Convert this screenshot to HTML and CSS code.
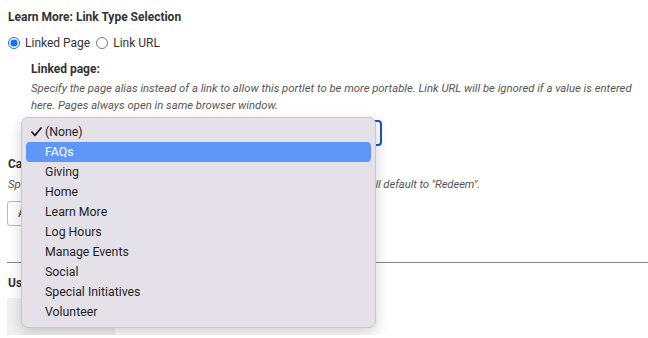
FILE: index.html
```html
<!DOCTYPE html>
<html>
<head>
<meta charset="utf-8">
<link rel="stylesheet" href="styles.css">
</head>
<body>
<div class="page">
  <div class="title">Learn More: Link Type Selection</div>
  <div class="radios">
    <label class="radio"><input type="radio" name="lt" checked> Linked Page</label>
    <label class="radio"><input type="radio" name="lt"> Link URL</label>
  </div>
  <div class="sub">
    <div class="label">Linked page:</div>
    <div class="help">Specify the page alias instead of a link to allow this portlet to be more portable. Link URL will be ignored if a value is entered here. Pages always open in same browser window.</div>
    <div class="select-wrap">
      <div class="select"></div>
      <div class="menu">
        <div class="item checked"><svg class="check" width="11" height="10" viewBox="0 0 11 10"><path d="M1 5.2 L4 8.4 L10 1" fill="none" stroke="#1c1c1c" stroke-width="1.7" stroke-linecap="round" stroke-linejoin="round"/></svg>(None)</div>
        <div class="item active">FAQs</div>
        <div class="item">Giving</div>
        <div class="item">Home</div>
        <div class="item">Learn More</div>
        <div class="item">Log Hours</div>
        <div class="item">Manage Events</div>
        <div class="item">Social</div>
        <div class="item">Special Initiatives</div>
        <div class="item">Volunteer</div>
      </div>
    </div>
  </div>
  <div class="label cta">Call to Action Text:</div>
  <div class="help help2">Specify the text to display on the call to action button. If left blank, the field will default to "Redeem".</div>
  <div class="input">Apply</div>
  <hr class="rule">
  <div class="label us">Use Image:</div>
  <div class="graybox"></div>
</div>
</body>
</html>
```
FILE: styles.css
```css
html, body { margin: 0; padding: 0; background: #fff; }
body { font-family: Roboto, "Liberation Sans", sans-serif; color: #333; font-size: 12px; }
.page { padding: 9px 0 0 8px; }
.title { font-weight: bold; font-size: 12px; line-height: 16px; color: #333; }
.radios { display: flex; align-items: center; gap: 6px; margin-top: 10px; height: 16px; }
.radio { display: flex; align-items: center; gap: 3px; font-size: 12px; color: #333; }
.radio input { margin: 0 2px 0 0; width: 12px; height: 12px; accent-color: #1a6cf0; }
.sub { padding-left: 23px; margin-top: 10px; }
.label { font-weight: bold; font-size: 12px; line-height: 16px; color: #333; }
.help { font-style: italic; font-size: 11.3px; line-height: 17px; color: #555; margin-top: 3px; }
.select-wrap { position: relative; margin-top: 6px; height: 26px; }
.select { width: 347px; height: 22px; border: 2px solid #1d52c4; border-radius: 4px; }
.menu { position: absolute; left: -10px; top: -3px; width: 355px; height: 211px; background: #e4e1e9; border: 1px solid #c9c6cf; border-radius: 7px; box-shadow: 0 5px 14px rgba(0,0,0,0.18); padding: 4px 4px; box-sizing: border-box; z-index: 2; font-family: Roboto, "Liberation Sans", sans-serif; }
.item { position: relative; height: 20px; line-height: 20px; padding-left: 19px; font-size: 12.3px; color: #1e1e1e; border-radius: 4px; }
.item.active { background: #5f97f8; color: #fff; }
.check { position: absolute; left: 5px; top: 5px; }
.cta { margin-top: 10px; }
.help2 { margin-top: 4px; letter-spacing: -0.1px; }
.input { margin-top: 8px; margin-left: -1px; width: 200px; height: 23px; border: 1px solid #bbb; border-radius: 3px; line-height: 23px; padding-left: 10px; color: #333; }
.rule { border: 0; border-top: 1px solid #888; margin: 36px 0 0 -1px; }
.us { margin-top: 12px; }
.graybox { margin-top: 7px; margin-left: -1px; width: 108px; height: 37px; background: #f1f1f1; }
```
